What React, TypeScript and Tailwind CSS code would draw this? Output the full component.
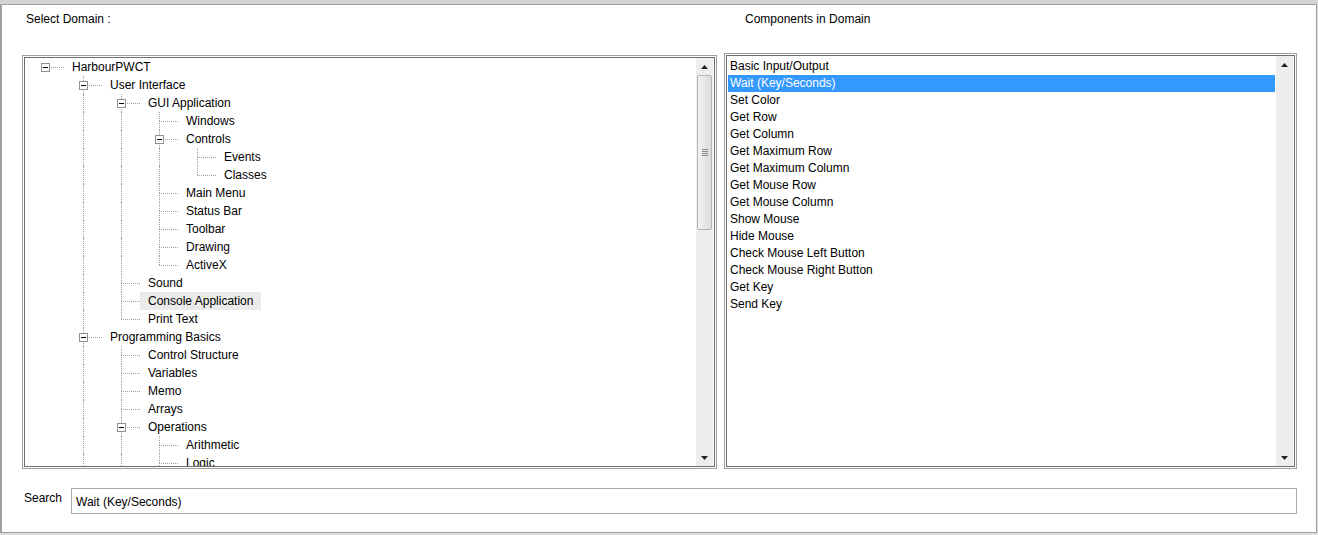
import React from "react";

type TreeNode = {
  label: string;
  children?: TreeNode[];
};

type Row = {
  label: string;
  level: number;
  hasChildren: boolean;
  isLast: boolean;
  ancestorsHasNext: boolean[];
};

const tree: TreeNode[] = [
  {
    label: "HarbourPWCT",
    children: [
      {
        label: "User Interface",
        children: [
          {
            label: "GUI Application",
            children: [
              { label: "Windows" },
              { label: "Controls", children: [{ label: "Events" }, { label: "Classes" }] },
              { label: "Main Menu" },
              { label: "Status Bar" },
              { label: "Toolbar" },
              { label: "Drawing" },
              { label: "ActiveX" },
            ],
          },
          { label: "Sound" },
          { label: "Console Application" },
          { label: "Print Text" },
        ],
      },
      {
        label: "Programming Basics",
        children: [
          { label: "Control Structure" },
          { label: "Variables" },
          { label: "Memo" },
          { label: "Arrays" },
          {
            label: "Operations",
            children: [{ label: "Arithmetic" }, { label: "Logic" }, { label: "Comparison" }],
          },
          { label: "Functions" },
        ],
      },
      { label: "Data Files" },
    ],
  },
];

const components = [
  "Basic Input/Output",
  "Wait (Key/Seconds)",
  "Set Color",
  "Get Row",
  "Get Column",
  "Get Maximum Row",
  "Get Maximum Column",
  "Get Mouse Row",
  "Get Mouse Column",
  "Show Mouse",
  "Hide Mouse",
  "Check Mouse Left Button",
  "Check Mouse Right Button",
  "Get Key",
  "Send Key",
];

const flatten = (nodes: TreeNode[], level: number, ancestors: boolean[]): Row[] =>
  nodes.flatMap((node, i) => {
    const isLast = i === nodes.length - 1;
    const row: Row = {
      label: node.label,
      level,
      hasChildren: !!node.children,
      isLast,
      ancestorsHasNext: ancestors,
    };
    return [row, ...(node.children ? flatten(node.children, level + 1, [...ancestors, !isLast]) : [])];
  });

// only the rows that fit in the view (the rest is scrolled off)
const rows = flatten(tree, 0, []).slice(0, 23);

const Arrow = ({ up }: { up?: boolean }) => (
  <div className="h-[17px] flex items-center justify-center">
    <svg width="7" height="4" viewBox="0 0 7 4">
      {up ? <path d="M0 4 L3.5 0 L7 4 Z" fill="#222" /> : <path d="M0 0 L3.5 4 L7 0 Z" fill="#222" />}
    </svg>
  </div>
);

const Scrollbar = ({ thumb }: { thumb?: boolean }) => (
  <div className="w-[17px] mr-px shrink-0 bg-[#eeeeee] flex flex-col">
    <Arrow up />
    <div className="flex-1 px-px">
      {thumb && (
        <div className="h-[155px] rounded-[2px] border border-[#b5b5b5] bg-gradient-to-r from-[#f2f2f2] to-[#dcdcdc] flex flex-col items-center justify-center gap-px">
          <div className="w-[6px] h-px bg-[#8a8a8a]" />
          <div className="w-[6px] h-px bg-[#8a8a8a]" />
          <div className="w-[6px] h-px bg-[#8a8a8a]" />
          <div className="w-[6px] h-px bg-[#8a8a8a]" />
        </div>
      )}
    </div>
    <Arrow />
  </div>
);

const TreeRow = ({ row }: { row: Row }) => {
  const hover = row.label === "Console Application";
  return (
    <div className="flex h-[18px] items-center">
      {row.ancestorsHasNext.map((hasNext, k) => (
        <div key={k} className="relative w-[38px] h-full shrink-0">
          {hasNext && <div className="absolute left-[19px] top-0 h-full border-l border-dotted border-[#a0a0a0]" />}
        </div>
      ))}
      <div className="relative w-[38px] h-full shrink-0">
        {row.level > 0 && (
          <div className="absolute left-[19px] top-0 h-[9px] border-l border-dotted border-[#a0a0a0]" />
        )}
        {row.level > 0 && !row.isLast && (
          <div className="absolute left-[19px] top-[9px] h-[9px] border-l border-dotted border-[#a0a0a0]" />
        )}
        <div className="absolute left-[19px] top-[9px] w-[19px] border-t border-dotted border-[#a0a0a0]" />
        {row.hasChildren && (
          <div className="absolute left-[15px] top-[5px] w-[9px] h-[9px] border border-[#919191] bg-white flex items-center justify-center">
            <div className="w-[5px] h-px bg-black" />
          </div>
        )}
      </div>
      <span className={`px-2 leading-[18px] whitespace-nowrap ${hover ? "bg-[#ebebeb]" : ""}`}>{row.label}</span>
    </div>
  );
};

export default function App() {
  return (
    <div className="w-[1318px] h-[535px] bg-[#dcdcdc] flex flex-col overflow-hidden font-['Liberation_Sans',Arial,sans-serif] text-[12px] text-black">
      <div className="h-[4px] shrink-0 bg-[#d4d4d4]" />
      <div className="w-[1317px] h-[529px] bg-white border-t border-r border-b border-l-2 border-[#a0a0a0] flex flex-col">
        <div className="flex pt-[7px] pl-[20px]">
          {/* domain tree */}
          <div className="w-[695px] flex flex-col">
            <div className="pl-[4px] h-[14px] leading-[14px]">Select Domain :</div>
            <div className="w-[695px] h-[414px] mt-[29px] border border-[#a0a0a0] p-px">
              <div className="w-full h-full border border-[#6e6e6e] flex overflow-hidden">
                <div className="flex-1 overflow-hidden pl-px">
                  {rows.map((row, i) => (
                    <TreeRow key={i} row={row} />
                  ))}
                </div>
                <Scrollbar thumb />
              </div>
            </div>
          </div>

          {/* components list */}
          <div className="ml-[7px] w-[573px] flex flex-col">
            <div className="pl-[21px] h-[14px] leading-[14px]">Components in Domain</div>
            <div className="w-[573px] h-[416px] mt-[27px] border border-[#a0a0a0] p-px">
              <div className="w-full h-full border border-[#6e6e6e] flex overflow-hidden">
                <div className="flex-1 overflow-hidden px-px pt-[2px]">
                  {components.map((c, i) => (
                    <div
                      key={c}
                      className={`h-[17px] leading-[17px] pl-[2px] whitespace-nowrap ${
                        i === 1 ? "bg-[#3399ff] text-white" : ""
                      }`}
                    >
                      {c}
                    </div>
                  ))}
                </div>
                <Scrollbar />
              </div>
            </div>
          </div>
        </div>

        {/* search */}
        <div className="flex items-start mt-[19px] pl-[22px]">
          <div className="w-[47px] mt-[2px] leading-[16px]">Search</div>
          <div className="w-[1226px] h-[26px] border border-[#aaaaaa] pl-[4px] pt-[2px] flex items-center leading-[16px]">
            Wait (Key/Seconds)
          </div>
        </div>
      </div>
    </div>
  );
}
